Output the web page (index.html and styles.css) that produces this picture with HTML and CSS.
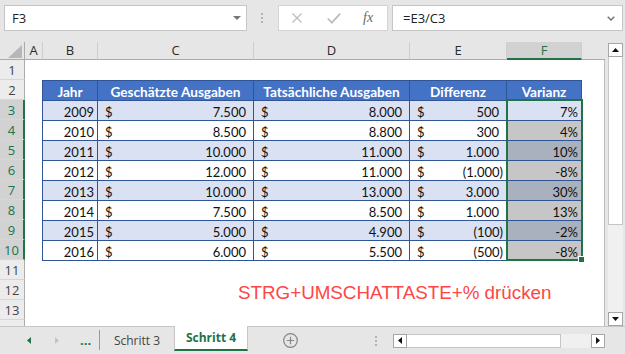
FILE: index.html
```html
<!DOCTYPE html>
<html lang="de">
<head>
    <meta charset="UTF-8">
    <meta name="viewport" content="width=device-width, initial-scale=1.0">
    <title>Varianz in Prozent</title>
    <link rel="stylesheet" href="styles.css">
</head>
<body>
    <div class="formula-bar">
        <div class="name-box">
            <span>F3</span>
            <svg class="caret" width="8" height="4" viewBox="0 0 8 4"><path d="M0 0h8L4 4z"/></svg>
        </div>
        <div class="grip"><i></i><i></i><i></i></div>
        <div class="fx-box">
            <svg class="ic-x" width="10" height="10" viewBox="0 0 10 10"><path d="M0.5 0.5l9 9M9.5 0.5l-9 9"/></svg>
            <svg class="ic-ok" width="14" height="11" viewBox="0 0 14 11"><path d="M0.8 5.5l4 4.2 8.4-9"/></svg>
            <span class="fx">fx</span>
        </div>
        <div class="formula-input">
            <span>=E3/C3</span>
            <svg class="chev" width="8" height="5" viewBox="0 0 8 5"><path d="M0.7 0.7l3.3 3.3 3.3-3.3"/></svg>
        </div>
    </div>

    <div class="workspace">
        <div class="sheet">
            <div class="col-heads">
                <div class="corner"><svg width="14" height="13" viewBox="0 0 14 13"><path d="M14 0V13H0z"/></svg></div>
                <div class="ch c-a">A</div>
                <div class="ch c-b">B</div>
                <div class="ch c-c">C</div>
                <div class="ch c-d">D</div>
                <div class="ch c-e">E</div>
                <div class="ch c-f on">F</div>
                <div class="ch c-rest"></div>
            </div>
            <div class="body">
                <div class="row-heads">
                    <div class="rh">1</div>
                    <div class="rh">2</div>
                    <div class="rh on">3</div>
                    <div class="rh on">4</div>
                    <div class="rh on">5</div>
                    <div class="rh on">6</div>
                    <div class="rh on">7</div>
                    <div class="rh on">8</div>
                    <div class="rh on">9</div>
                    <div class="rh on">10</div>
                    <div class="rh">11</div>
                    <div class="rh">12</div>
                    <div class="rh">13</div>
                    <div class="rh cut"></div>
                </div>
                <div class="cells">
                    <div class="data">
                        <div class="tr head">
                            <div>Jahr</div>
                            <div>Geschätzte Ausgaben</div>
                            <div>Tatsächliche Ausgaben</div>
                            <div>Differenz</div>
                            <div>Varianz</div>
                        </div>
                        <div class="tr band">
                            <div class="num">2009</div>
                            <div class="acc"><span>$</span><span>7.500</span></div>
                            <div class="acc"><span>$</span><span>8.000</span></div>
                            <div class="acc"><span>$</span><span>500</span></div>
                            <div class="num">7%</div>
                        </div>
                        <div class="tr">
                            <div class="num">2010</div>
                            <div class="acc"><span>$</span><span>8.500</span></div>
                            <div class="acc"><span>$</span><span>8.800</span></div>
                            <div class="acc"><span>$</span><span>300</span></div>
                            <div class="num sel">4%</div>
                        </div>
                        <div class="tr band">
                            <div class="num">2011</div>
                            <div class="acc"><span>$</span><span>10.000</span></div>
                            <div class="acc"><span>$</span><span>11.000</span></div>
                            <div class="acc"><span>$</span><span>1.000</span></div>
                            <div class="num sel">10%</div>
                        </div>
                        <div class="tr">
                            <div class="num">2012</div>
                            <div class="acc"><span>$</span><span>12.000</span></div>
                            <div class="acc"><span>$</span><span>11.000</span></div>
                            <div class="acc"><span>$</span><span class="neg">(1.000)</span></div>
                            <div class="num sel">-8%</div>
                        </div>
                        <div class="tr band">
                            <div class="num">2013</div>
                            <div class="acc"><span>$</span><span>10.000</span></div>
                            <div class="acc"><span>$</span><span>13.000</span></div>
                            <div class="acc"><span>$</span><span>3.000</span></div>
                            <div class="num sel">30%</div>
                        </div>
                        <div class="tr">
                            <div class="num">2014</div>
                            <div class="acc"><span>$</span><span>7.500</span></div>
                            <div class="acc"><span>$</span><span>8.500</span></div>
                            <div class="acc"><span>$</span><span>1.000</span></div>
                            <div class="num sel">13%</div>
                        </div>
                        <div class="tr band">
                            <div class="num">2015</div>
                            <div class="acc"><span>$</span><span>5.000</span></div>
                            <div class="acc"><span>$</span><span>4.900</span></div>
                            <div class="acc"><span>$</span><span class="neg">(100)</span></div>
                            <div class="num sel">-2%</div>
                        </div>
                        <div class="tr">
                            <div class="num">2016</div>
                            <div class="acc"><span>$</span><span>6.000</span></div>
                            <div class="acc"><span>$</span><span>5.500</span></div>
                            <div class="acc"><span>$</span><span class="neg">(500)</span></div>
                            <div class="num sel">-8%</div>
                        </div>
                    </div>
                    <p class="note">STRG+UMSCHATTASTE+% drücken</p>
                    <div class="selection"><span class="handle"></span></div>
                </div>
            </div>
        </div>
        <div class="vscroll">
            <div class="sb-btn"><svg width="7" height="4" viewBox="0 0 7 4"><path d="M0 4h7L3.5 0z"/></svg></div>
            <div class="sb-thumb"></div>
            <div class="sb-track"></div>
            <div class="sb-btn"><svg width="7" height="4" viewBox="0 0 7 4"><path d="M0 0h7L3.5 4z"/></svg></div>
        </div>
    </div>

    <div class="tabbar">
        <div class="nav">
            <svg class="nav-prev" width="4" height="7" viewBox="0 0 4 7"><path d="M4 0v7L0 3.5z"/></svg>
            <svg class="nav-next" width="4" height="7" viewBox="0 0 4 7"><path d="M0 0v7l4-3.5z"/></svg>
            <span class="more">...</span>
        </div>
        <div class="tab">Schritt 3</div>
        <div class="tab active">Schritt 4</div>
        <div class="add">
            <svg width="15" height="15" viewBox="0 0 15 15"><circle cx="7.5" cy="7.5" r="6.8"/><path d="M7.5 3.8v7.4M3.8 7.5h7.4"/></svg>
        </div>
        <div class="grip grip-h"><i></i><i></i><i></i></div>
        <div class="hscroll">
            <div class="sb-btn"><svg width="4" height="7" viewBox="0 0 4 7"><path d="M4 0v7L0 3.5z"/></svg></div>
            <div class="sb-thumb"></div>
            <div class="sb-track"></div>
            <div class="sb-btn"><svg width="4" height="7" viewBox="0 0 4 7"><path d="M0 0v7l4-3.5z"/></svg></div>
        </div>
    </div>
</body>
</html>
```

FILE: styles.css
```css
* {
    margin: 0;
    padding: 0;
    box-sizing: border-box;
}
body {
    width: 625px;
    height: 354px;
    overflow: hidden;
    background-color: #e6e6e6;
    font-family: "Open Sans", sans-serif;
    color: #333;
}

/* formula bar */
.formula-bar {
    height: 40px;
    display: flex;
    align-items: flex-start;
    padding-top: 5px;
}
.name-box {
    margin-left: 4px;
    width: 243px;
    height: 26px;
    background-color: #fff;
    border: 1px solid #c6c6c6;
    display: flex;
    align-items: center;
    justify-content: space-between;
    padding: 0 5px 0 7px;
    font-size: 13px;
    color: #222;
}
.caret { fill: #777; }
.grip {
    margin-left: 14px;
    width: 2px;
    height: 26px;
    display: flex;
    flex-direction: column;
    justify-content: center;
    gap: 2px;
}
.grip i {
    display: block;
    width: 2px;
    height: 2px;
    background-color: #b3b3b3;
}
.fx-box {
    margin-left: 15px;
    width: 110px;
    height: 26px;
    background-color: #fff;
    border: 1px solid #d4d4d4;
    display: flex;
    align-items: center;
}
.ic-x {
    margin-left: 13px;
    stroke: #bdbdbd;
    stroke-width: 1.3;
}
.ic-ok {
    margin-left: 25px;
    fill: none;
    stroke: #bdbdbd;
    stroke-width: 1.8;
}
.fx {
    margin-left: 22px;
    font-family: "Liberation Serif", serif;
    font-style: italic;
    font-size: 14px;
    color: #6a6a6a;
}
.formula-input {
    margin-left: 4px;
    margin-right: 2px;
    flex: 1;
    height: 26px;
    background-color: #fff;
    border: 1px solid #c6c6c6;
    display: flex;
    align-items: center;
    justify-content: space-between;
    padding: 0 7px 0 10px;
    font-size: 13px;
    color: #222;
}
.chev {
    fill: none;
    stroke: #777;
    stroke-width: 1.5;
}

/* sheet */
.workspace {
    height: 286px;
    display: flex;
}
.sheet {
    width: 605px;
    display: flex;
    flex-direction: column;
}
.col-heads {
    height: 20px;
    display: flex;
    padding-top: 2px;
}
.corner {
    width: 25px;
    border-right: 1px solid #ababab;
    border-bottom: 1px solid #ababab;
    display: flex;
    align-items: flex-end;
    justify-content: flex-end;
    padding: 0 2px 1px 0;
}
.corner svg { fill: #b7b7b7; }
.ch {
    border-right: 1px solid #cdcdcd;
    border-bottom: 1px solid #ababab;
    text-align: center;
    font-size: 13px;
    line-height: 17px;
    color: #2a2a2a;
}
.c-a { width: 18px; }
.c-b { width: 55px; }
.c-c { width: 156px; }
.c-d { width: 156px; }
.c-e { width: 97px; }
.c-f { width: 75px; }
.c-rest { flex: 1; border-right: none; }
.ch.on {
    background-color: #d2d2d2;
    color: #217346;
    border-bottom: 2px solid #217346;
}
.body {
    flex: 1;
    display: flex;
    overflow: hidden;
}
.row-heads { width: 25px; }
.rh {
    height: 20px;
    border-bottom: 1px solid #d6d6d6;
    border-right: 1px solid #ababab;
    background-color: #ececec;
    text-align: center;
    font-size: 13px;
    line-height: 21px;
    color: #444;
}
.rh.on {
    background-color: #d2d2d2;
    color: #217346;
    border-right: 2px solid #217346;
}
.rh.cut { height: 6px; border-bottom: none; }
.cells {
    flex: 1;
    position: relative;
    background-color: #fff;
    border-right: 1px solid #bdbdbd;
}

/* table */
.data {
    display: grid;
    grid-template-columns: 55px 156px 156px 97px 75px;
    grid-auto-rows: 20px;
    width: max-content;
    margin: 20px 0 0 17px;
    border-top: 1px solid #2f5597;
    border-left: 1px solid #2f5597;
    font-family: Lato, sans-serif;
    font-size: 13px;
    color: #111;
}
.tr { display: contents; }
.tr > div {
    display: flex;
    align-items: flex-end;
    border-right: 1px solid #2f5597;
    border-bottom: 1px solid #2f5597;
    padding: 0 3px 1px;
    line-height: 14px;
    white-space: nowrap;
}
.head > div {
    background-color: #4472c4;
    color: #fff;
    font-weight: bold;
    font-size: 13.6px;
    justify-content: center;
}
.band > div { background-color: #d9e1f2; }
.tr > .num { justify-content: flex-end; }
.tr > .acc {
    justify-content: space-between;
    padding-left: 7px;
    padding-right: 7px;
}
.acc .neg { margin-right: -4px; }
.tr > .sel { background-color: #c6c6c6; }
.band > .sel { background-color: #a9b0be; }

.note {
    margin: 22px 0 0 213px;
    font-family: "Liberation Sans", Arial, sans-serif;
    font-size: 18.8px;
    line-height: 20px;
    color: #ff4545;
    white-space: nowrap;
}
.selection {
    position: absolute;
    left: 481px;
    top: 39px;
    width: 77px;
    height: 162px;
    border: 2px solid #217346;
}
.handle {
    position: absolute;
    right: -4px;
    bottom: -4px;
    width: 7px;
    height: 7px;
    background-color: #217346;
    border: 1px solid #fff;
}

/* scrollbars */
.vscroll {
    margin-left: 3px;
    width: 15px;
    display: flex;
    flex-direction: column;
    padding-top: 3px;
}
.sb-btn {
    flex: 0 0 14px;
    height: 14px;
    background-color: #fff;
    border: 1px solid #a6a6a6;
    display: flex;
    align-items: center;
    justify-content: center;
}
.sb-btn svg { fill: #111; }
.sb-thumb {
    background-color: #fff;
    border: 1px solid #c6c6c6;
}
.vscroll .sb-thumb { height: 168px; border-top: none; }
.sb-track {
    flex: 1;
    background-color: #f0f0f0;
}

/* sheet tabs */
.tabbar {
    height: 28px;
    display: flex;
    border-top: 1px solid #c6c6c6;
    font-size: 12px;
}
.nav {
    width: 100px;
    display: flex;
    align-items: center;
    margin: 3px 0 4px;
    border-right: 1px solid #9a9a9a;
}
.nav-prev { margin-left: 27px; fill: #217346; }
.nav-next { margin-left: 24px; fill: #c3c3c3; }
.more {
    margin-left: 21px;
    font-weight: bold;
    font-size: 13px;
    color: #217346;
    line-height: 13px;
}
.tab {
    width: 74px;
    display: flex;
    align-items: center;
    justify-content: center;
    color: #444;
}
.tab.active {
    margin: -1px 0 3px;
    background-color: #fff;
    border-left: 1px solid #c6c6c6;
    border-right: 1px solid #c6c6c6;
    border-bottom: 2px solid #217346;
    color: #217346;
    font-weight: bold;
}
.add {
    margin-left: 35px;
    display: flex;
    align-items: center;
}
.add svg {
    fill: none;
    stroke: #858585;
    stroke-width: 1.2;
}
.grip-h {
    margin-left: 77px;
    height: auto;
}
.hscroll {
    margin-left: 16px;
    width: 212px;
    height: 14px;
    align-self: center;
    display: flex;
}
.hscroll .sb-thumb { width: 154px; border-left: none; }
```
